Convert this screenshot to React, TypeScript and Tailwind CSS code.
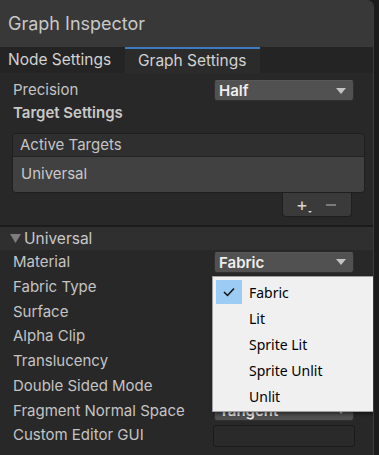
import React from 'react';

const inter = { fontFamily: 'Inter, "Noto Sans", sans-serif' };

function Arrow() {
  return (
    <svg width="10" height="6" viewBox="0 0 10 6" className="shrink-0">
      <path d="M0 0 H10 L5 6 Z" fill="#c4c4c4" />
    </svg>
  );
}

function Dropdown({ value }: { value: string }) {
  return (
    <div className="flex h-[21px] w-[140px] items-center justify-between rounded-[3px] border border-[#303030] border-t-[#585858] bg-[#515151] pl-[4px] pr-[7px]">
      <span className="text-[15px] font-semibold leading-none text-[#eeeeee]">{value}</span>
      <Arrow />
    </div>
  );
}

function Row({ label, children }: { label: string; children?: React.ReactNode }) {
  return (
    <div className="flex h-[24.75px] items-center">
      <span className="w-[214px] shrink-0 pl-[13px] text-[15px] text-[#c4c4c4]">{label}</span>
      {children}
    </div>
  );
}

const menuItems = ['Fabric', 'Lit', 'Sprite Lit', 'Sprite Unlit', 'Unlit'];

export default function App() {
  return (
    <div className="flex h-[455px] w-[379px] overflow-hidden bg-[#1b1b1b]" style={inter}>
      <div className="relative flex w-[374px] flex-col overflow-hidden rounded-tr-[7px] border-r border-[#3c3c3c] bg-[#282828]">
        {/* Header */}
        <div className="flex h-[47px] shrink-0 items-center bg-[#383838] pl-[8px]">
          <span className="text-[18px] text-[#c8c8c8]">Graph Inspector</span>
        </div>

        {/* Tabs */}
        <div className="flex h-[26px] shrink-0 bg-[#242424]">
          <div className="flex w-[125px] items-center pl-[8px] text-[15.5px] text-[#d2d2d2]">Node Settings</div>
          <div className="flex w-[135px] items-center border-t-[2px] border-[#3d7ac2] bg-[#2b2b2b] pl-[13px] text-[15.5px] text-[#d2d2d2]">
            Graph Settings
          </div>
        </div>

        {/* Graph settings */}
        <div className="flex shrink-0 flex-col pt-[7px]">
          <div className="flex h-[21px] items-center">
            <span className="w-[214px] shrink-0 pl-[13px] text-[15px] text-[#c4c4c4]">Precision</span>
            <Dropdown value="Half" />
          </div>
          <div className="flex h-[24px] items-center pl-[13px] text-[15px] font-semibold text-[#c8c8c8]">
            Target Settings
          </div>

          <div className="ml-[12px] mt-[8px] w-[353px]">
            <div className="overflow-hidden rounded-[4px] border border-[#1f1f1f]">
              <div className="flex h-[23px] items-center border-b border-[#232323] bg-[#2f2f2f] pl-[7px] text-[15px] text-[#c4c4c4]">
                Active Targets
              </div>
              <div className="flex h-[35px] items-center bg-[#414141] pl-[8px] text-[15px] text-[#c8c8c8]">
                Universal
              </div>
            </div>
            <div className="flex justify-end pr-[13px]">
              <div className="flex h-[24px] w-[70px] items-center gap-[18px] rounded-b-[4px] border border-t-0 border-[#1f1f1f] bg-[#3a3a3a] pl-[13px]">
                <span className="relative text-[18px] leading-none text-[#d6d6d6]">
                  +
                  <span className="absolute -right-[4px] bottom-[1px] h-0 w-0 border-x-[2px] border-t-[2px] border-x-transparent border-t-[#d6d6d6]" />
                </span>
                <span className="h-[2px] w-[10px] bg-[#7a7a7a]" />
              </div>
            </div>
          </div>
        </div>

        {/* Universal foldout */}
        <div className="mt-[8px] h-[2px] shrink-0 bg-[#1c1c1c]" />
        <div className="flex h-[23px] shrink-0 items-center gap-[3px] bg-[#2f2f2f] pl-[10px]">
          <svg width="11" height="9" viewBox="0 0 11 9">
            <path d="M0 0 H11 L5.5 9 Z" fill="#7d7d7d" />
          </svg>
          <span className="text-[15.5px] text-[#c8c8c8]">Universal</span>
        </div>

        <div className="flex flex-col">
          <Row label="Material">
            <Dropdown value="Fabric" />
          </Row>
          <Row label="Fabric Type" />
          <Row label="Surface" />
          <Row label="Alpha Clip" />
          <Row label="Translucency" />
          <Row label="Double Sided Mode" />
          <Row label="Fragment Normal Space">
            <Dropdown value="Tangent" />
          </Row>
          <Row label="Custom Editor GUI">
            <div className="-ml-[1px] h-[22px] w-[142px] rounded-[3px] border border-[#1a1a1a] bg-[#2a2a2a]" />
          </Row>
        </div>

        {/* Popup menu */}
        <div
          className="absolute left-[212px] top-[276px] z-10 flex w-[166px] flex-col border border-[#a0a0a0] bg-[#f0f0f0] py-[2px] pl-[3px] shadow-[2px_2px_4px_rgba(0,0,0,0.5)]"
          style={{ fontFamily: '"Noto Sans", "Open Sans", sans-serif' }}
        >
          {menuItems.map((item, i) => (
            <div key={item} className="flex h-[26px] items-center">
              <div className={`flex h-[24px] w-[26px] items-center justify-center ${i === 0 ? 'bg-[#9ccbf3]' : ''}`}>
                {i === 0 && (
                  <svg width="12" height="10" viewBox="0 0 12 10">
                    <path d="M1 5 L4.5 8.5 L11 1.5" stroke="#111" strokeWidth="1.5" fill="none" />
                  </svg>
                )}
              </div>
              <span className="pl-[7px] text-[14px] text-black">{item}</span>
            </div>
          ))}
        </div>
      </div>
    </div>
  );
}
